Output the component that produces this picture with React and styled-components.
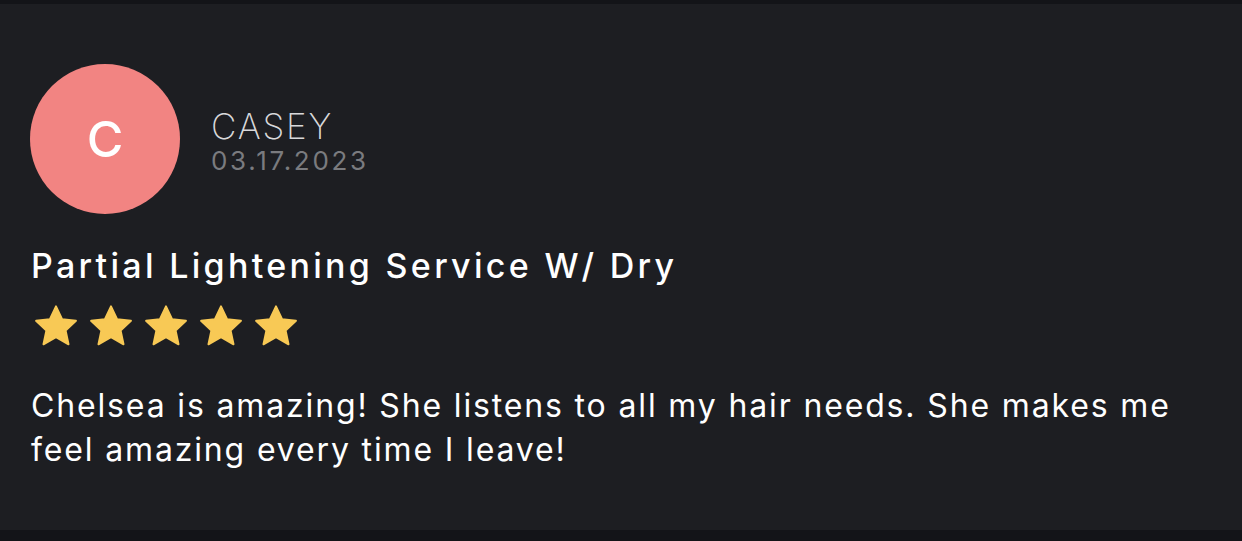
import React from "react";
import styled, { createGlobalStyle } from "styled-components";

const GlobalStyle = createGlobalStyle`
  html, body {
    margin: 0;
    padding: 0;
    background: #131418;
  }
  body {
    font-family: Inter, "Noto Sans", "Liberation Sans", sans-serif;
    -webkit-font-smoothing: antialiased;
  }
`;

const Page = styled.div`
  width: 1242px;
  height: 541px;
  padding: 4px 0 11px;
  box-sizing: border-box;
  background: #131418;
  display: flex;
`;

const Card = styled.div`
  flex: 1;
  background: #1d1e22;
  padding: 60px 30px 0;
  display: flex;
  flex-direction: column;
`;

const Header = styled.div`
  display: flex;
  align-items: center;
  gap: 31px;
`;

const Avatar = styled.div`
  width: 150px;
  height: 150px;
  border-radius: 50%;
  background: ${(p) => p.color};
  color: #fff;
  display: flex;
  align-items: center;
  justify-content: center;
  font-size: 50px;
  font-weight: 500;
`;

const Who = styled.div`
  display: flex;
  flex-direction: column;
  padding-top: 3px;
`;

const Name = styled.div`
  font-size: 35px;
  font-weight: 200;
  letter-spacing: 1.8px;
  color: #d8d8da;
  line-height: 40px;
`;

const DateText = styled.div`
  font-size: 26px;
  font-weight: 400;
  letter-spacing: 2.7px;
  color: #7a7b7f;
  line-height: 30px;
`;

const Title = styled.h2`
  margin: 32px 0 0 1px;
  font-size: 34px;
  font-weight: 500;
  letter-spacing: 3.3px;
  color: #fff;
  line-height: 40px;
`;

const Stars = styled.div`
  display: flex;
  gap: 7px;
  margin: 18px 0 0 2px;
`;

const Comment = styled.p`
  margin: 35px 0 0 1px;
  font-size: 32px;
  line-height: 44px;
  letter-spacing: 1.85px;
  color: #fff;
  max-width: 1180px;
`;

function Star() {
  return (
    <svg width="48" height="45" viewBox="0 0 24 23">
      <path
        d="M12 1.2l3.1 6.6 7.1.8-5.3 4.9 1.5 7.1L12 17l-6.4 3.6 1.5-7.1L1.8 8.6l7.1-.8z"
        fill="#f8c955"
        stroke="#f8c955"
        strokeWidth="1"
        strokeLinejoin="round"
      />
    </svg>
  );
}

export default function App() {
  return (
    <>
      <GlobalStyle />
      <Page>
        <Card>
          <Header>
            <Avatar color="#f28482">C</Avatar>
            <Who>
              <Name>CASEY</Name>
              <DateText>03.17.2023</DateText>
            </Who>
          </Header>
          <Title>Partial Lightening Service W/ Dry</Title>
          <Stars>
            {[0, 1, 2, 3, 4].map((i) => (
              <Star key={i} />
            ))}
          </Stars>
          <Comment>
            Chelsea is amazing! She listens to all my hair needs. She makes me
            feel amazing every time I leave!
          </Comment>
        </Card>
      </Page>
    </>
  );
}
